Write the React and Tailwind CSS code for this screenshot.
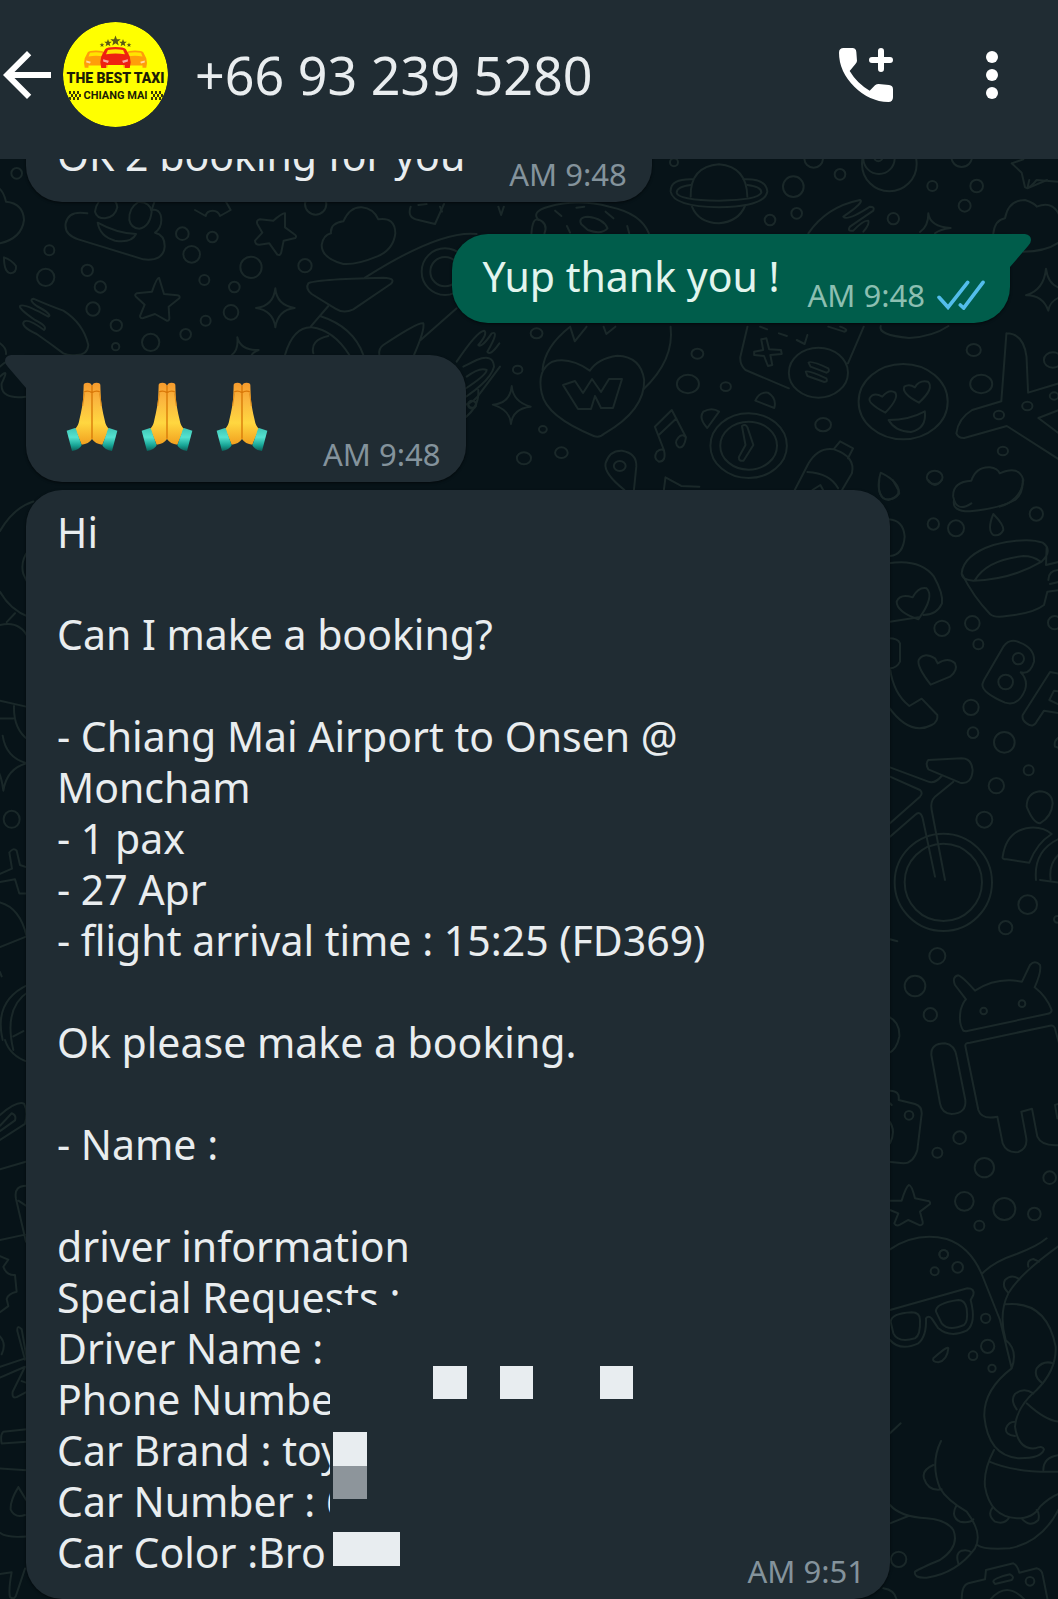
import React from 'react';

// Wallpaper doodles, one sheet per region of the chat background
const doodleSheets = [
  {
    id: 'top-left',
    transform: 'translate(0 180) scale(0.33333)',
    circles: [
      [148, 211, 15], [137, 292, 26], [262, 271, 17], [301, 321, 17], [279, 387, 20], [349, 436, 17],
      [347, 500, 11], [452, 487, 26], [547, 161, 19], [637, 171, 16], [575, 223, 25], [753, 262, 32],
      [613, 300, 15], [703, 321, 16], [693, 397, 22], [617, 422, 15], [557, 463, 16], [915, 257, 20],
      [947, 72, 32], [1335, 275, 70], [1335, 275, 44], [50, -20, 16], [1416, 674, 12],
    ],
    paths: [
      // cloud at the edge
      'M-10 20Q10 30 18 65Q70 70 72 120Q65 175 0 190',
      // smiling swirl
      'M262 100Q205 90 197 130Q192 165 235 178L430 238Q490 245 494 200Q495 165 465 158Q490 140 482 105Q475 85 455 90L465 60',
      'M285 95Q290 60 318 50Q350 55 352 82Q345 112 315 115Q290 115 285 95Z',
      'M388 120Q385 85 415 66Q450 65 455 95Q450 140 418 146Q393 145 388 120Z',
      'M293 128Q350 160 408 162Q395 190 345 182Q300 170 293 128Z',
      'M585 90L617 108Q620 92 638 92Q655 92 660 108L692 90L675 60',
      // stars
      'M855 100Q848 98 820 122L780 118Q768 120 772 132L787 158L765 182Q765 194 778 194L808 190L832 224Q842 228 844 216L851 182L886 174Q892 168 882 162L855 142Z',
      'M477 293Q470 293 456 335L410 340Q402 344 408 350L434 374L420 408Q420 416 430 414L465 402L500 422Q508 424 508 414L506 380L538 355Q542 348 532 346L492 342Z',
      'M826 325Q830 375 884 384Q834 390 826 442Q820 392 768 384Q820 378 826 325Z',
      'M712 472Q722 512 776 510Q752 518 750 540M712 472Q716 510 695 525',
      // clouds and heart
      'M1030 252Q965 235 965 195Q970 165 993 160Q990 130 1030 124Q1050 80 1085 82Q1120 85 1135 118Q1185 110 1186 160Q1180 210 1130 230Q1070 255 1030 252Z',
      'M1232 80Q1220 115 1255 120L1305 132L1332 72M1255 75L1280 72',
      // drop and mittens
      'M12 232Q12 278 32 280Q50 278 48 258Q35 240 12 232Z',
      'M190 520Q150 490 110 462Q60 438 72 425Q85 415 132 450Q145 440 105 420Q55 385 60 378Q70 368 145 410Q160 405 110 378Q85 360 100 356Q150 378 190 392Q250 430 265 495Q262 525 230 525Q205 528 190 520Z',
      'M0 490Q20 505 18 522',
      // lamp
      'M925 310Q940 298 1150 293Q1190 295 1172 312L1060 388Q1030 402 1005 385L935 342Q915 325 925 310Z',
      'M1095 293Q1320 150 1430 162M985 378L932 440M960 408Q1060 440 1090 525M855 525Q880 440 935 442Q1000 450 1048 525M940 520Q930 480 985 468',
      'M1270 430Q1255 425 1150 495Q1135 505 1138 525M1270 430Q1275 450 1242 525M1262 480L1370 385',
      'M1370 545Q1430 455 1452 452Q1465 460 1435 495Q1445 505 1475 460Q1500 450 1462 515Q1470 530 1498 490M1395 675Q1425 665 1440 640L1500 560',
      // ringed planet peeking out
      'M1390 560L1430 540Q1480 520 1482 560Q1470 610 1350 680M1400 590Q1440 560 1460 570Q1460 585 1390 630M1435 630Q1440 690 1370 730Q1260 770 1185 735',
      'M175 770Q170 750 210 765M400 750L418 780M510 775Q530 740 585 750Q640 740 655 780M920 770Q970 745 1030 770',
      'M0 560Q40 520 78 560M0 590Q30 560 5 610Q0 660 78 650',
    ],
  },
  {
    id: 'top-right',
    transform: 'translate(620 0) scale(0.33333)',
    circles: [
      [162, 487, 12], [581, 475, 28], [660, 523, 16], [520, 560, 31], [530, 640, 16], [450, 660, 16],
      [808, 492, 82], [777, 475, 47], [775, 472, 12], [1025, 470, 31], [937, 558, 15], [1070, 558, 19],
      [1034, 617, 18], [820, 656, 17],
    ],
    paths: [
      // planet
      'M212 590Q210 500 297 493Q380 500 382 590M216 620Q235 668 297 670Q355 665 375 618',
      'M220 538Q150 535 152 575Q160 620 297 622Q435 620 442 575Q440 535 370 538M212 555Q170 560 170 578Q175 600 297 602Q415 600 424 578Q425 560 382 555',
      // mitten
      'M565 700Q620 620 720 600Q735 605 670 650Q680 665 750 620Q765 620 760 632L690 680Q680 695 700 692Q730 660 745 662Q750 672 730 695',
      'M925 640Q930 680 992 684Q960 688 945 700M925 640Q925 680 900 696',
      'M1175 490L1205 518L1215 562Q1225 570 1250 540L1314 545M1175 490L1210 478',
      'M1120 700Q1125 660 1155 655Q1165 600 1215 600Q1245 610 1250 620Q1300 600 1320 650M1210 755Q1280 755 1320 725',
      'M1278 806Q1285 860 1330 866M1278 806Q1272 870 1218 886Q1268 885 1285 932Q1290 900 1325 890',
    ],
  },
  {
    id: 'middle',
    transform: 'translate(440 180) scale(0.39417 0.33333)',
    circles: [
      [245, 460, 15], [197, 569, 12], [82, 673, 10], [261, 748, 10], [213, 835, 18], [308, 818, 16],
      [653, 521, 15], [629, 612, 28], [725, 620, 13], [972, 734, 20], [1354, 510, 18], [1373, 612, 28],
      [1418, 705, 13], [1490, 678, 13], [1428, 813, 13], [1255, 892, 20], [1555, 540, 23], [1558, 648, 11],
      [456, 858, 15], [783, 797, 97], [783, 797, 72], [1175, 665, 113], [960, 578, 75],
    ],
    paths: [
      // heart
      'M380 572Q330 530 285 545Q245 570 258 640Q270 710 390 768Q405 775 418 760Q520 690 518 600Q510 530 450 527Q400 535 380 572Z',
      'M260 570Q265 500 330 440L342 484L372 440M415 440L422 462L445 440M585 440Q595 540 516 628',
      // sparkle, music and map pin
      'M182 618Q185 665 230 680Q185 685 180 732Q178 690 134 674Q178 670 182 618Z',
      'M545 740L588 690L624 772M545 740L568 810M555 765L600 715M568 810Q575 845 555 845Q540 835 550 815Q560 805 568 810M624 772Q620 805 606 802Q592 790 605 772Q615 760 624 772',
      'M468 930Q415 880 420 850Q430 810 462 812Q500 820 498 860L492 930M568 930L572 892L612 918L658 920',
      // alarm clock hands and bells
      'M766 738Q775 730 780 742L795 795L770 842Q758 845 758 832L775 795Z',
      'M678 744Q655 715 668 695Q690 680 708 695ZM800 662Q810 635 832 638Q855 655 848 684Z',
      // game pad
      'M780 440L762 530Q760 555 775 570L885 625M1075 440L1035 550M812 440L830 448M860 460L880 468M905 480L925 492L932 465M985 440L1025 455Q1040 450 1015 440',
      'M815 478L828 475L835 508L865 510L867 522L838 525L843 555L832 558L822 528L797 525L797 515L820 510Z',
      'M935 548Q940 540 985 565Q990 575 980 578L940 560ZM928 575Q935 570 980 595Q985 605 975 606L932 588Z',
      // smiling face
      'M1130 698Q1085 670 1090 655Q1100 635 1122 650Q1140 625 1155 638Q1165 655 1130 698ZM1215 668Q1170 640 1178 620Q1190 610 1205 622Q1215 600 1238 605Q1255 625 1215 668Z',
      'M1138 720Q1190 720 1230 694Q1235 745 1195 756Q1155 755 1138 720Z',
      // bowl
      'M1118 438Q1110 465 1190 474Q1250 470 1290 438',
      // aeroplane
      'M1437 460Q1480 460 1488 530L1492 638L1570 610M1437 460L1424 664L1350 690Q1315 715 1310 760Q1315 775 1330 774L1438 738L1570 838M1570 760L1518 714L1570 690',
      // bottle
      'M900 930L935 850Q960 800 1000 808Q1055 830 1045 880L1020 930M932 876Q990 880 1010 925M1000 806L1015 784L1048 805L1035 835M945 930L965 915L972 930',
      // drop and cloud
      'M1118 878Q1165 905 1165 940Q1150 965 1125 955Q1105 930 1118 878Z',
      'M1348 970Q1310 1000 1302 950Q1300 905 1348 902Q1360 860 1395 862Q1415 865 1420 880Q1470 855 1480 900Q1475 960 1420 980',
      // donut
      'M232 160Q235 110 250 120M250 120Q230 95 275 80Q350 55 430 80Q510 100 530 160M265 160Q275 130 250 118M358 132Q350 112 375 110Q415 115 425 145Q410 165 375 150ZM292 92L308 108M346 83L366 80M420 95L440 115M475 138L480 160M322 138L330 158',
      'M0 80L5 95M148 80L155 105L162 80M1495 0L1490 25L1540 0',
    ],
  },
  {
    id: 'right-upper',
    transform: 'translate(860 480) scale(0.33333)',
    circles: [
      [220, 132, 17], [288, 145, 24], [529, 102, 20], [246, 445, 23], [337, 430, 22], [355, 493, 15],
      [333, 682, 23], [339, 758, 16], [433, 787, 31], [506, 871, 15], [409, 917, 23], [373, 1019, 24],
      [475, 536, 17], [437, 606, 22], [584, 428, 20], [250, 1207, 146], [250, 1207, 116],
    ],
    paths: [
      'M282 60Q275 95 330 94Q420 85 465 60Q490 40 488 0M205 0Q225 30 245 0',
      // umbrella and heart
      'M85 118Q130 120 134 170Q130 225 90 228M85 250Q180 235 222 290Q250 340 246 370Q230 405 190 405M90 425L175 412',
      'M175 418Q110 395 110 365Q120 340 158 352Q175 320 200 325Q225 350 175 418Z',
      'M400 102Q432 135 430 150Q420 170 400 165Q380 150 400 102Z',
      // tea cup
      'M305 280Q310 225 400 195Q500 170 548 188Q580 210 545 245Q450 300 340 302Q305 300 305 280Q340 350 390 402Q405 415 440 408Q520 400 552 375L562 335L600 330M345 300Q380 240 490 228Q520 228 540 244M560 200L558 255L600 245M565 300Q565 270 600 270M570 312L600 305',
      // heart
      'M212 614Q170 560 176 540Q190 515 225 535L233 550Q265 530 285 550Q295 570 270 590Z',
      // handset
      'M85 475Q115 475 120 490L120 545Q110 565 90 565M90 565Q100 640 148 678L185 656L232 705Q235 725 215 735Q150 770 85 680',
      // bicycle
      'M90 862L205 905Q225 912 245 888M90 890L180 930Q190 940 180 950L90 1030M90 1070L165 1005Q182 990 188 1015L225 1190M280 905L225 950Q210 965 215 990L255 1200',
      'M205 840Q195 850 205 868L300 908Q335 915 338 870Q335 835 305 835Z',
      // person
      'M538 934Q500 940 500 980Q520 1030 540 1030Q575 1010 578 970Q575 935 538 934ZM428 1130Q440 1050 510 1043Q550 1040 575 1062Q530 1090 508 1148L440 1138Q425 1138 428 1130ZM600 1075Q520 1110 528 1200M600 1120Q565 1150 572 1200',
      // toy blocks
      'M372 600L430 500Q450 472 480 488Q525 505 522 545Q510 585 482 577Q505 600 495 630Q475 680 435 668Q360 635 368 610Z',
      'M600 582L570 576L488 705Q485 720 500 730Q520 745 530 725L552 692L600 700M600 635L582 632L568 660L600 675M600 770Q580 780 585 800L600 805',
      'M58 0Q50 55 85 60Q120 50 115 30L98 0',
    ],
  },
  {
    id: 'right-middle',
    transform: 'translate(860 880) scale(0.33333)',
    circles: [
      [503, 74, 28], [437, 143, 20], [232, 228, 24], [165, 318, 31], [211, 404, 20], [371, 393, 10],
      [486, 371, 10], [147, 706, 13], [299, 773, 19], [232, 818, 15], [373, 863, 29], [569, 893, 19],
      [313, 964, 28], [433, 987, 33], [523, 1002, 19], [358, 1037, 15], [251, 1123, 13], [293, 1162, 16],
      [224, 1174, 12], [592, 118, 10],
    ],
    paths: [
      'M540 0L600 8M90 178L112 184',
      // robot
      'M310 452Q295 430 302 390Q310 365 318 358L285 315Q275 290 295 286Q308 290 345 332Q410 290 486 305L510 255Q525 238 540 255Q545 275 524 322Q560 350 575 390Q575 400 560 402L318 454Z',
      'M316 498Q315 488 330 488L570 437Q585 435 586 450L600 500M316 498L355 690Q365 720 412 710L428 790Q440 820 475 816Q505 805 498 770L484 695L516 686L532 770Q545 800 600 795M600 670L585 675L592 715',
      'M214 525Q212 490 255 490Q285 495 290 530L316 660Q320 700 275 702Q245 700 240 670Z',
      // badge and camera
      'M85 410Q120 425 118 470Q110 510 85 520M90 632Q120 632 116 660L165 672Q190 680 184 710L172 810Q160 850 130 850L85 845M85 720Q110 750 90 790M85 665L95 675',
      // star
      'M147 915Q138 920 125 962L90 962M90 990L115 1000L103 1030Q108 1040 120 1034L145 1020L180 1036Q190 1035 188 1025L180 995L210 972Q212 962 200 962L165 955Q155 915 147 915',
    ],
  },
  {
    id: 'right-lower',
    transform: 'translate(860 1240) scale(0.33333)',
    circles: [
      [251, 43, 13], [377, 235, 14], [383, 319, 20], [339, 347, 13], [396, 385, 11], [116, 958, 23],
      [510, 1024, 13],
    ],
    paths: [
      // octopus with glasses
      'M90 28Q170 -25 260 -3Q330 20 365 102L420 240L455 385Q370 450 373 530Q385 650 480 655Q545 655 552 628Q548 615 525 625Q475 630 465 560Q470 500 530 450Q590 390 587 320Q560 180 435 193M365 102Q400 65 470 42Q530 20 560 -5M600 15Q480 100 445 160Q415 220 437 300Q475 330 455 385',
      'M90 210L322 145Q345 145 340 165L332 180Q350 250 320 272Q270 295 235 265L215 235Q205 225 198 235Q200 290 175 310Q120 335 90 300',
      'M92 245Q95 220 155 217Q180 217 180 240Q182 285 165 295Q115 310 100 280ZM228 215Q225 190 295 180Q315 180 320 205Q325 245 312 255Q265 275 245 250Z',
      'M220 355Q265 315 265 325Q262 360 235 367Q215 365 220 355Z',
      'M445 158Q425 140 435 120Q455 100 478 118M505 80Q500 60 520 57L537 65M548 430Q520 410 530 385Q550 360 580 370M470 508Q450 480 465 462Q490 440 520 460M465 588Q435 585 438 565Q445 545 465 545',
      'M500 490Q560 545 600 545M402 630Q370 690 375 740Q390 830 470 835Q520 835 540 800Q570 770 600 760M388 665Q470 700 600 695M550 690Q550 650 600 645M398 802Q380 825 405 845Q435 855 448 832M485 835Q510 865 535 840Q540 820 530 810',
      'M243 603Q210 670 240 745Q260 780 320 815Q370 880 345 925Q290 1000 200 1013Q160 1015 165 995Q180 985 240 960Q300 920 280 870Q260 840 200 835Q120 830 90 795M90 850L145 828M220 675Q185 690 192 715Q205 755 245 748M290 795Q270 830 300 845Q330 850 340 838M295 970Q285 940 305 932Q325 928 335 938M352 915Q370 930 450 925Q550 905 600 800M90 580L122 550',
      // camera
      'M305 1080Q305 1035 325 1030L375 1018L378 990L460 970Q472 975 478 998L530 985Q545 988 548 1005L563 1080M400 1025Q400 1015 450 1003Q465 1010 455 1020L405 1032ZM390 1080Q440 1020 495 1080M70 1045Q105 1050 110 1080',
    ],
  },
  {
    id: 'left-upper',
    transform: 'translate(0 490) scale(0.33333 0.35714)',
    circles: [[35, 922, 24]],
    paths: [
      'M100 32Q40 50 0 115M85 170Q60 200 70 235L85 265M0 285Q30 335 85 355M45 345L20 370M0 378Q60 365 85 415M0 590L85 608M0 640L40 640M42 605Q40 670 85 700',
      'M8 688Q18 750 80 765Q20 780 10 842Q5 800 -10 780',
      'M28 1015Q40 1000 50 1010L60 1050L85 1058M28 1015L36 1060L0 1075M0 1098L45 1090L58 1130L85 1130M0 1155Q60 1170 80 1250L0 1280M85 1385Q-20 1430 8 1540M85 1405Q10 1450 40 1568M40 1530L70 1515M0 1350L5 1362',
    ],
  },
  {
    id: 'left-lower',
    transform: 'translate(0 1040) scale(0.33333 0.35714)',
    circles: [],
    paths: [
      'M15 0Q30 45 85 62M0 210Q50 170 72 178Q85 200 75 235L0 280M0 240L35 205Q50 210 45 225L0 255M0 362L80 340M85 408Q40 405 48 445L78 565M55 450L80 465M0 560L75 545',
      // gear
      'M0 605L25 615L10 635Q20 660 45 658L50 705Q25 710 20 725L25 745L0 762',
      'M0 830Q20 850 5 880M80 890L65 810Q50 795 52 815L75 895M0 915L80 890M0 945L75 915L38 985Q35 1005 50 1000L80 985M80 960L65 955',
      'M80 1090L10 1097Q0 1105 5 1130L80 1125M0 1200L80 1205M55 1252Q30 1290 32 1315Q45 1340 75 1330M55 1252L80 1290M0 1380Q20 1395 80 1390M0 1495L35 1490Q25 1540 30 1560Q45 1570 50 1550L75 1480',
    ],
  },
];

const Wallpaper = () => (
  <svg
    aria-hidden="true"
    viewBox="0 159 1058 1440"
    preserveAspectRatio="xMinYMin slice"
    fill="none"
    stroke="#1a2829"
    strokeWidth="2"
    strokeLinecap="round"
    strokeLinejoin="round"
    className="absolute inset-0 w-full h-full [&_*]:[vector-effect:non-scaling-stroke]"
  >
    {doodleSheets.map((sheet) => (
      <g key={sheet.id} transform={sheet.transform}>
        {sheet.circles.map(([cx, cy, r]) => (
          <circle key={`${cx}-${cy}-${r}`} cx={cx} cy={cy} r={r} />
        ))}
        {sheet.paths.map((d) => (
          <path key={d} d={d} />
        ))}
      </g>
    ))}
    {/* zig-zag inside the heart */}
    <path d="M563 385L575 381L583 393L592 379L601 392L609 379L622 379L613 408L601 408L595 396L591 409L578 409Z" />
  </svg>
);

const Star = ({ x, y, size }) => (
  <path
    transform={`translate(${x} ${y}) scale(${size})`}
    d="M0-1L.26-.33L.95-.31L.4.12L.59.81L0 .42L-.59.81L-.4.12L-.95-.31L-.26-.33Z"
    fill="#5c5a14"
  />
);

const Car = () => (
  <>
    <path d="M-15 2L-11-8Q-9-11 0-11Q9-11 11-8L15 2L16 10L15 18H10V14H-10V18H-15L-16 10Z" />
    <path d="M-10-1L-8-7Q0-9 8-7L10-1Q0-3-10-1Z" fill="#ffe400" />
    <path d="M-13 6L-7 8L-8 11L-13 9ZM13 6L7 8L8 11L13 9Z" fill="#fff" opacity="0.6" />
  </>
);

const Checks = ({ x }) => (
  <g fill="#3a3a08">
    {[0, 1, 2].map((row) =>
      [0, 1, 2].map((col) => (
        <rect key={`${row}-${col}`} x={x + col * 4 + (row % 2) * 2} y={69 + row * 3} width="2" height="3" />
      ))
    )}
  </g>
);

const Avatar = () => (
  <svg viewBox="0 0 105 105" className="w-[105px] h-[105px] shrink-0 rounded-full" role="img" aria-label="The Best Taxi Chiang Mai">
    <circle cx="52.5" cy="52.5" r="52.5" fill="#ffff00" />
    <Star x={52.5} y={19} size={5.5} />
    <Star x={45} y={21} size={4} />
    <Star x={60} y={21} size={4} />
    <Star x={39} y={23} size={2.5} />
    <Star x={66} y={23} size={2.5} />
    <g transform="translate(33 35) scale(0.75 0.6)" fill="#ff9d0a"><Car /></g>
    <g transform="translate(72 35) scale(0.75 0.6)" fill="#ff9d0a"><Car /></g>
    <g transform="translate(52.5 33) scale(0.95 0.72)" fill="#ee2211"><Car /></g>
    <text x="52.5" y="61" textAnchor="middle" fontFamily="Roboto, sans-serif" fontWeight="900" fontSize="14" fill="#1d1d05">
      THE BEST TAXI
    </text>
    <text x="52.5" y="77" textAnchor="middle" fontFamily="Roboto, sans-serif" fontWeight="700" fontSize="11" fill="#1d1d05">
      CHIANG MAI
    </text>
    <Checks x={6} />
    <Checks x={88} />
  </svg>
);

const FoldedHands = () => (
  <svg viewBox="0 0 156 210" className="w-[52px] h-[70px]" aria-hidden="true">
    <defs>
      <linearGradient id="skin" x1="0" y1="0" x2="0" y2="1">
        <stop offset="0" stopColor="#f59a2c" />
        <stop offset="0.3" stopColor="#fbb83f" />
        <stop offset="0.65" stopColor="#ffd740" />
        <stop offset="1" stopColor="#f2a01f" />
      </linearGradient>
      <linearGradient id="cuff" x1="0" y1="0" x2="0" y2="1">
        <stop offset="0" stopColor="#3fc4b4" />
        <stop offset="0.4" stopColor="#55e3d0" />
        <stop offset="0.75" stopColor="#18a596" />
        <stop offset="1" stopColor="#0b5f59" />
      </linearGradient>
    </defs>
    <path d="M53 8Q54 2 64 2Q76 2 78 12V171Q68 186 47 188L27 140Q37 133 40 114C46 88 51 66 52 40Z" fill="url(#skin)" />
    <path d="M103 8Q102 2 92 2Q80 2 78 12V171Q88 186 109 188L129 140Q119 133 116 114C110 88 105 66 104 40Z" fill="url(#skin)" />
    <path d="M78 12V170M54 30Q66 24 78 32Q90 24 102 30" fill="none" stroke="#d97808" strokeWidth="4" />
    <path d="M55 34L50 72M101 34L106 72" fill="none" stroke="#e08a18" strokeWidth="3" />
    <path d="M2 146L27 138Q31 140 34 154L47 190Q40 204 18 207Z" fill="url(#cuff)" />
    <path d="M154 146L129 138Q125 140 122 154L109 190Q116 204 138 207Z" fill="url(#cuff)" />
  </svg>
);

const ReadTicks = () => (
  <svg viewBox="0 0 144 90" className="w-12 h-[30px] ml-3" fill="none" stroke="#53bdeb" strokeWidth="11" strokeLinecap="round" role="img" aria-label="Read">
    <path d="M6 52L33 82L92 7M70 75L80 84L138 7" />
  </svg>
);

const Tail = ({ outgoing }) => (
  <svg
    viewBox="0 0 22 34"
    aria-hidden="true"
    className={outgoing ? 'absolute top-0 -right-[21px] w-[22px] h-[34px]' : 'absolute top-0 -left-[21px] w-[22px] h-[34px] -scale-x-100'}
  >
    <path d="M0 0H16Q22 1 22 6Q22 9 19 12L1 33H0Z" fill={outgoing ? '#005d4b' : '#202c33'} />
  </svg>
);

const Bubble = ({ outgoing, tail, time, className = '', children }) => (
  <article
    className={`relative flex items-end justify-between pl-[31px] pr-[25px] pt-[17px] rounded-[36px] shadow-sm shadow-black/40 ${
      outgoing ? 'self-end bg-[#005d4b] text-[#e2f5ee]' : 'self-start bg-[#202c33] text-[#e9edef]'
    } ${tail ? (outgoing ? 'rounded-tr-none' : 'rounded-tl-none') : ''} ${className}`}
  >
    {tail && <Tail outgoing={outgoing} />}
    {children}
    <div className={`flex items-center shrink-0 pb-3 text-[31px] leading-8 ${outgoing ? 'text-[#8cbfb1]' : 'text-[#84939c]'}`}>
      <time>{time}</time>
      {outgoing && <ReadTicks />}
    </div>
  </article>
);

const bookingText = `Hi

Can I make a booking?

- Chiang Mai Airport to Onsen @
Moncham
- 1 pax
- 27 Apr
- flight arrival time : 15:25 (FD369)

Ok please make a booking.

- Name :

driver information
Special Requests :
Driver Name :
Phone Numbe
Car Brand : toy
Car Number : 6
Car Color :Bro`;

// Mosaic that hides the driver's personal details
const Mosaic = () => (
  <svg viewBox="0 0 304 262" className="absolute left-[304px] bottom-8 w-[304px] h-[262px]" aria-hidden="true" shapeRendering="crispEdges">
    <rect width="304" height="262" fill="#202c33" />
    <g fill="#e8edf0">
      <rect x="103" y="61" width="34" height="33" />
      <rect x="170" y="61" width="33" height="33" />
      <rect x="270" y="61" width="33" height="33" />
      <rect x="3" y="127" width="34" height="34" />
      <rect x="3" y="227" width="67" height="34" />
    </g>
    <rect x="3" y="161" width="34" height="33" fill="#8d959b" />
  </svg>
);

const Header = () => (
  <header className="relative z-10 flex items-center bg-[#202c33] h-[159px] pb-2.5 pl-[3px] pr-[30px] text-white">
    <button type="button" aria-label="Back" className="shrink-0">
      <svg viewBox="4 4 16 16" className="w-12 h-12" fill="currentColor">
        <path d="M20 11H7.83l5.59-5.59L12 4l-8 8 8 8 1.41-1.41L7.83 13H20v-2z" />
      </svg>
    </button>
    <div className="ml-3 shrink-0">
      <Avatar />
    </div>
    <h1 className="ml-[27px] flex-1 text-[52px] leading-[60px] text-[#e9edef] whitespace-nowrap">+66 93 239 5280</h1>
    <button type="button" aria-label="Call" className="shrink-0">
      <svg viewBox="0 0 162 162" className="w-[54px] h-[54px]" fill="currentColor">
        <path d="M0 14Q0 0 14 0H40Q51 0 52 12L54 38Q54 43 50 47L32 69Q54 106 92 128L108 112Q113 108 119 108L150 111Q162 112 162 124V148Q162 162 148 162Q90 160 46 116Q0 70 0 14Z" />
        <path d="M126 9V63M99 36H153" stroke="currentColor" strokeWidth="18" strokeLinecap="round" />
      </svg>
    </button>
    <button type="button" aria-label="More options" className="shrink-0 ml-[63px]">
      <svg viewBox="0 0 24 24" className="w-[72px] h-[72px]" fill="currentColor">
        <circle cx="12" cy="6" r="2" />
        <circle cx="12" cy="12" r="2" />
        <circle cx="12" cy="18" r="2" />
      </svg>
    </button>
  </header>
);

const App = () => {
  return (
    <div className="flex flex-col min-h-screen bg-[#071318] font-['Noto_Sans',sans-serif]">
      <Header />
      <main className="relative flex-1 overflow-hidden">
        <Wallpaper />
        <div className="relative flex flex-col -mt-[46px] pl-[26px] pr-12 text-[41px] leading-[51px]">
          <Bubble time="AM 9:48">
            <p className="pb-[21px] mr-11">OK 2 booking for you</p>
          </Bubble>
          <Bubble outgoing tail time="AM 9:48" className="mt-8">
            <p className="pb-[21px] mr-7">Yup thank you !</p>
          </Bubble>
          <Bubble tail time="AM 9:48" className="mt-8">
            <div role="img" aria-label="Folded hands, three times" className="flex items-center gap-[23px] h-[89px] ml-[9px] mr-[55px] mb-[21px]">
              <FoldedHands />
              <FoldedHands />
              <FoldedHands />
            </div>
          </Bubble>
          <Bubble time="AM 9:51" className="mt-2 w-full max-w-[864px]">
            <p className="pb-[21px] whitespace-pre">{bookingText}</p>
            <Mosaic />
          </Bubble>
        </div>
      </main>
    </div>
  );
};

export default App;
